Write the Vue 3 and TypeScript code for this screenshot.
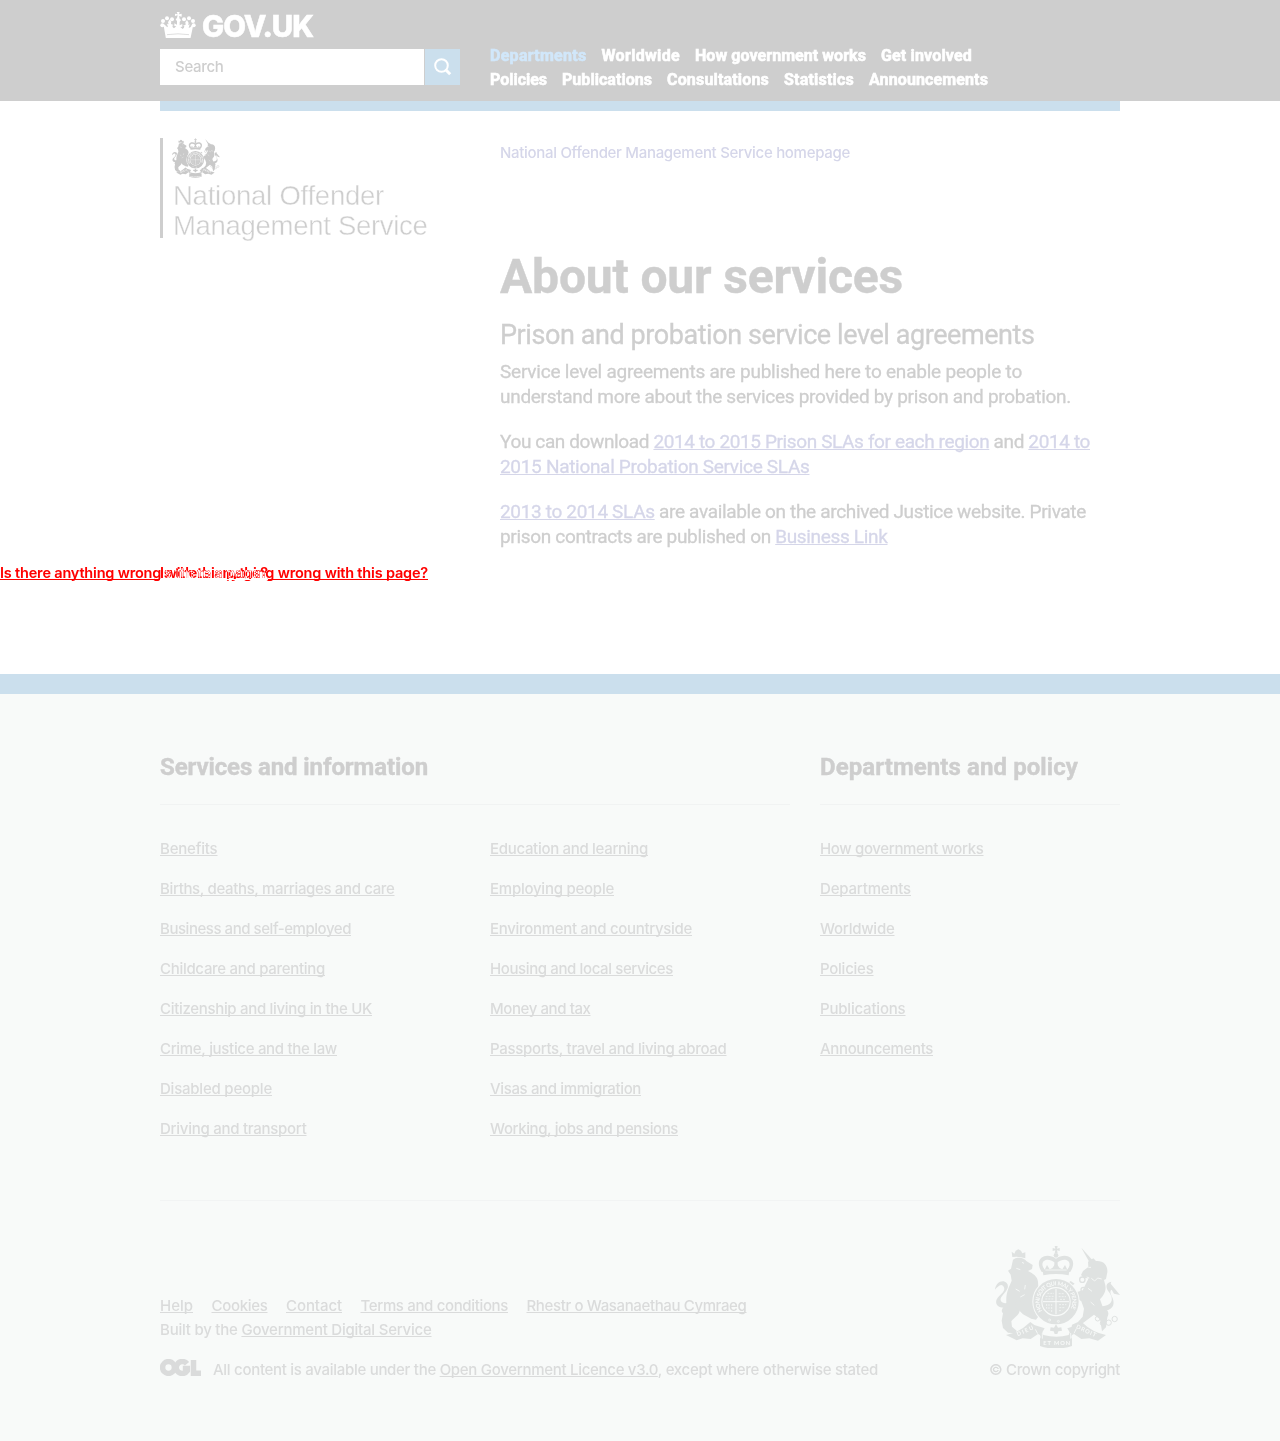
<script setup lang="ts">
import type { Directive } from 'vue'

interface FooterColumn {
  title: string
  width: number
  wide: boolean
  lists: [string, number][][]
}

// Tracks a line of text so that it fills the given measure in pixels.
const vFit: Directive<HTMLElement, number> = {
  mounted(el, { value }) {
    const width = el.getBoundingClientRect().width
    const count = (el.textContent ?? '').trim().length
    el.style.letterSpacing = `${(value - width) / count}px`
  },
}

const nav: [string, number][][] = [
  [['Departments', 96.5], ['Worldwide', 78.5], ['How government works', 171], ['Get involved', 91]],
  [['Policies', 57], ['Publications', 90], ['Consultations', 102], ['Statistics', 70], ['Announcements', 119]],
]

const columns: FooterColumn[] = [
  {
    title: 'Services and information',
    width: 268,
    wide: true,
    lists: [
      [
        ['Benefits', 57.5],
        ['Births, deaths, marriages and care', 234.5],
        ['Business and self-employed', 191],
        ['Childcare and parenting', 165],
        ['Citizenship and living in the UK', 212],
        ['Crime, justice and the law', 177],
        ['Disabled people', 112],
        ['Driving and transport', 146.5],
      ],
      [
        ['Education and learning', 158],
        ['Employing people', 124],
        ['Environment and countryside', 202],
        ['Housing and local services', 183],
        ['Money and tax', 100.5],
        ['Passports, travel and living abroad', 236.5],
        ['Visas and immigration', 151],
        ['Working, jobs and pensions', 188],
      ],
    ],
  },
  {
    title: 'Departments and policy',
    width: 258,
    wide: false,
    lists: [
      [
        ['How government works', 163.5],
        ['Departments', 91],
        ['Worldwide', 74.5],
        ['Policies', 53.5],
        ['Publications', 85.5],
        ['Announcements', 113],
      ],
    ],
  },
]

const meta: [string, number][] = [
  ['Help', 33],
  ['Cookies', 56],
  ['Contact', 56],
  ['Terms and conditions', 147.5],
  ['Rhestr o Wasanaethau Cymraeg', 220],
]
</script>

<template>
  <div class="page">
    <svg class="defs" width="0" height="0" aria-hidden="true">
      <symbol id="crest" viewBox="45 33 375 306">
        <g fill="currentColor">
          <!-- crown -->
          <path d="M224 33h9l-2 8 8-2v9l-8-2 2 9h-9l2-9-8 2v-9l8 2z" />
          <circle cx="228" cy="61" r="7" />
          <path d="M186 112C158 70 198 50 228 71c30-21 70-1 42 41l-9-5c22-30-8-42-28-25v22h-10V82c-20-17-50-5-28 25z" />
          <path d="M186 92l8 12 7-14 8 13 8-4 11-15 11 15 8 4 8-13 7 14 8-12-4 29q-38-8-76 0z" />
          <!-- lion -->
          <path d="M97 66l-2-16 8 6 4-9 8-4 8 4 4 8 9-3v18q-18-7-39-4z" />
          <path d="M99 74c14-10 34-6 40 4l19 12-2 12-12 6c16 8 28 16 30 32l2 36c-12 14-13 26-12 40l10 30-6 8-15-3-8-10-12-20-15-6c2 12 1 20-6 26-8 8-13 12-18 18l2 16 14 12-4 8-22-2-15-14-4-22 4-22c-7-7-2-12-2-14l12-18c-2-30 8-46 16-66l-3-18-8-12 9-6z" />
          <path d="M112 186l36 44 22 1 5 14-24 5-22-12-24-24z" />
          <path d="M89 214C56 228 36 204 57 184c14-14 20-20 13-30-8-10-18 3-25 10 2-22 23-32 35-20 12 14-8 30-16 42-8 14 6 22 25 18z" />
          <!-- unicorn -->
          <path d="M304 38l35 39-9 8z" />
          <path d="M324 80l16-10 8 8c22-2 36 12 34 34l-4 20-6 3 4 16c4 20-8 32-16 42l8 22c14 8 22 16 14 32l-4 30-12 12-6-36-18-14-18 14-32 24-18 4 2-12 18-8 14-16 4-24-8-22-14-10-18-5-16-20 2-14 14-12 12 8-8 6-8 8 10 12 16-2 14-4 18-36-14-1-9-9 6-12 16-12z" />
          <path d="M366 214c38-4 33-28 20-44-11-15-8-28 8-30l-2 6 28 34-18-4-7-12c-7 4-3 13 3 25 8 22-1 38-29 38z" />
          <!-- scroll -->
          <path d="M78 300q40-7 73-39l12 9 31 10-7 12 3 8q40 10 76 0l3-8-7-12 31-10 12-9q33 32 73 39l-24 17-26-7-24 2-22-15q-12 4-6 14v22q-50 16-96 0v-22q6-10-6-14l-22 15-24-2-18 6z" />
        </g>
        <g class="paper-stroke" fill="none" stroke-width="2.5">
          <path d="M109 100l12 4M107 162l12 7M136 150l-2 13M121 186l13-7M126 82l6 3M325 97h8M320 126l8 3M334 130l10 8 9-9 12 3M324 160l12 9M332 201l11 10M196 105h64M166 283l7 13M289 281l-7 14M187 294v17M272 294v17" />
        </g>
        <circle cx="228" cy="200" r="71" class="paper" />
        <circle cx="228" cy="200" r="56" fill="none" stroke="currentColor" stroke-width="24" />
        <path id="garter" d="M187.500 227.600A49 49 0 1 1 268.500 227.600" fill="none" />
        <text class="garter-text"><textPath href="#garter" textLength="204">HONI SOIT QUI MAL Y PENSE</textPath></text>
        <g fill="currentColor">
          <ellipse cx="228" cy="200" rx="41" ry="40" />
          <path class="paper" d="M206 268q22 7 44 0l-2 24h-40z" />
          <path d="M228 268l6 10 10-1 2 10-11 2-3 8h-8l-3-8-11-2 2-10 10 1z" />
          <g fill="none" stroke="currentColor">
            <circle cx="307" cy="134" r="8" stroke-width="4" />
            <circle cx="310" cy="164" r="7" stroke-width="4" />
            <g stroke-width="3">
              <circle cx="353" cy="251" r="7" /><circle cx="367" cy="265" r="6" />
              <circle cx="386" cy="263" r="8" /><circle cx="404" cy="252" r="8" />
            </g>
          </g>
        </g>
        <g class="paper-stroke" fill="none" stroke-width="2">
          <path d="M228 162v76M189 200h78" stroke-width="3" />
          <path d="M202 175h20M197 184h24M196 192h24M236 176h18M236 185h22M240 193h16M200 207v14M207 207v20M215 207v24M237 209h22M238 218h18M237 227h10" stroke-dasharray="6 3" />
          <circle cx="209" cy="255" r="3" /><circle cx="235" cy="259" r="3" />
        </g>
        <text class="motto" x="113" y="304" transform="rotate(-24 113 304)" textLength="53">DIEU</text>
        <text class="motto" x="190" y="331" textLength="80">ET MON</text>
        <text class="motto" x="287" y="279" transform="rotate(25 287 279)" textLength="64">DROIT</text>
      </symbol>
    </svg>

    <header class="header">
      <div class="container header-row">
        <div class="brand">
          <div class="logo">
            <svg class="crown" viewBox="0 0 108 78" aria-hidden="true">
              <g fill="#fff">
                <path d="M50 0h9l-2 7 8-2v9l-8-2 2 8 4 4-4 6v10l8-4v8l-6 1 7 6q5-3 5-8l-4-2 8-3-1-7 5-7 5 9-2 6 5-2-3 11 6-3 4-6 3 4-8 38q-38-6-73 0L11 41l3-4 4 6 6 3-3-11 5 2-2-6 5-9 5 7-1 7 8 3-4 2q0 5 5 8l7-6-6-1v-8l8 4v-10l-4-6 4-4 2-8-8 2V5l8 2z" />
                <circle cx="7" cy="40" r="6" /><circle cx="9" cy="27" r="6" />
                <circle cx="21" cy="19" r="6" /><circle cx="36" cy="22" r="6" />
                <circle cx="72" cy="22" r="6" /><circle cx="87" cy="19" r="6" />
                <circle cx="99" cy="27" r="6" /><circle cx="101" cy="40" r="6" />
              </g>
              <path d="M21 68q33-5 66 0" fill="none" stroke="#cecece" stroke-width="2" />
            </svg>
            <span v-fit="111" class="wordmark">GOV.UK</span>
          </div>
          <div class="search">
            <div class="search-field"><span v-fit="48.5">Search</span></div>
            <div class="search-button">
              <svg viewBox="0 0 18 18" width="18" height="18" fill="none" stroke="#fff">
                <circle cx="7.500" cy="7.500" r="6.300" stroke-width="2" />
                <path d="M11.500 11.500l4.700 4.700" stroke-width="3" />
              </svg>
            </div>
          </div>
        </div>
        <nav class="nav">
          <div v-for="(row, r) in nav" :key="r" class="nav-row">
            <a v-for="[label, width] in row" :key="label" v-fit="width" :class="{ active: label === 'Departments' }">{{ label }}</a>
          </div>
        </nav>
      </div>
    </header>
    <div class="container header-bar"></div>

    <main class="container main">
      <div class="organisation">
        <div class="org-logo">
          <svg class="org-crest"><use href="#crest" /></svg>
          <div><span v-fit="211">National Offender</span></div>
          <div><span v-fit="254.5">Management Service</span></div>
        </div>
      </div>
      <article class="article">
        <div class="homepage"><a v-fit="350">National Offender Management Service homepage</a></div>
        <h1><span v-fit="403">About our services</span></h1>
        <h2><span v-fit="534.5">Prison and probation service level agreements</span></h2>
        <p>
          <span v-fit="522">Service level agreements are published here to enable people to</span><br />
          <span v-fit="571">understand more about the services provided by prison and probation.</span>
        </p>
        <p>
          <span v-fit="590">You can download <a>2014 to 2015 Prison SLAs for each region</a> and <a>2014 to</a></span><br />
          <span v-fit="309.5"><a>2015 National Probation Service SLAs</a></span>
        </p>
        <p>
          <span v-fit="586"><a>2013 to 2014 SLAs</a> are available on the archived Justice website. Private</span><br />
          <span v-fit="387.5">prison contracts are published on <a>Business Link</a></span>
        </p>
      </article>
    </main>

    <div class="feedback">
      <a v-fit="268">Is there anything wrong with this page?</a>
      <a v-fit="268" class="shifted">Is there anything wrong with this page?</a>
    </div>

    <footer class="footer">
      <div class="container">
        <div class="columns">
          <section v-for="column in columns" :key="column.title" :class="{ wide: column.wide }">
            <h3><span v-fit="column.width">{{ column.title }}</span></h3>
            <div class="lists">
              <ul v-for="(list, i) in column.lists" :key="i">
                <li v-for="[label, width] in list" :key="label"><a v-fit="width">{{ label }}</a></li>
              </ul>
            </div>
          </section>
        </div>
        <div class="meta">
          <div>
            <div class="meta-links">
              <a v-for="[label, width] in meta" :key="label" v-fit="width">{{ label }}</a>
            </div>
            <div class="built"><span v-fit="271.5">Built by the <a>Government Digital Service</a></span></div>
            <div class="licence">
              <svg class="ogl" viewBox="0 0 41 17" fill="none" stroke="currentColor" stroke-width="5.500">
                <circle cx="8.500" cy="8.500" r="5.900" />
                <path d="M27 4.800a6 6 0 1 0 0.300 7V9.500h-4.500M33.500 1v13.300H41" />
              </svg>
              <span v-fit="665">All content is available under the <a>Open Government Licence v3.0</a>, except where otherwise stated</span>
            </div>
          </div>
          <div class="copyright">
            <svg class="footer-crest"><use href="#crest" /></svg>
            <span v-fit="131">© Crown copyright</span>
          </div>
        </div>
      </div>
    </footer>
  </div>
</template>

<style>
body {
  background: #fff;
}
</style>

<style scoped>
.page {
  height: 1441px;
  display: flex;
  flex-direction: column;
  overflow: hidden;
  background: #fff;
  color: #cecece;
  font-family: Roboto, "Liberation Sans", sans-serif;
  font-size: 16px;
  line-height: 24px;
  white-space: nowrap;
}
.defs {
  position: absolute;
}
.container {
  width: 960px;
  margin: 0 auto;
}
.header {
  height: 101px;
  flex: none;
  background: #cecece;
  color: #fff;
}
.header-row {
  display: flex;
  gap: 30px;
}
.brand {
  width: 300px;
}
.logo {
  display: flex;
  height: 49px;
}
.crown {
  width: 36px;
  height: 26px;
  margin: 12px 6px 0 0;
}
.wordmark {
  height: 30px;
  margin-top: 11px;
  font: 800 29.5px/30px Inter, "Liberation Sans", sans-serif;
  -webkit-text-stroke: 0.5px #fff;
}
.search {
  display: flex;
  gap: 1px;
  height: 36px;
}
.search-field,
.homepage,
.lists,
.meta {
  font-family: Inter, "Liberation Sans", sans-serif;
  font-size: 15px;
  font-weight: 450;
}
.search-field {
  flex: 1;
  padding-left: 15px;
  background: #fff;
  color: #cecece;
  line-height: 36px;
}
.search-button {
  display: flex;
  align-items: center;
  justify-content: center;
  width: 35px;
  background: #cbdfed;
}
.nav {
  padding-top: 44px;
  font-weight: 700;
  -webkit-text-stroke: 0.6px currentColor;
}
.nav-row {
  display: flex;
  gap: 15px;
}
.active {
  color: #d1e7fa;
}
.header-bar {
  height: 10px;
  flex: none;
  background: #cbdfed;
}
.main {
  display: flex;
  height: 563px;
  flex: none;
}
.organisation {
  width: 340px;
  padding-top: 27px;
}
.org-logo {
  height: 100px;
  padding-left: 10px;
  border-left: 3px solid #cecece;
  font: 400 27.5px/30px "Liberation Sans", sans-serif;
  -webkit-text-stroke: 0.4px #fff;
}
.org-crest {
  display: block;
  width: 48px;
  height: 40px;
  margin: 0 0 3px -1px;
  -webkit-text-stroke: 0;
  --paper: #fff;
  color: #c9c9c9;
}
.article {
  padding-top: 30px;
}
.homepage {
  color: #d5d6e9;
}
h1,
h2,
h3,
p,
ul {
  margin: 0;
  padding: 0;
}
h1 {
  margin-top: 87px;
  font-size: 48px;
  line-height: 50px;
  -webkit-text-stroke: 0.4px currentColor;
}
h2 {
  margin: 18px 0 9px;
  font-size: 27px;
  font-weight: 400;
  line-height: 30px;
  -webkit-text-stroke: 0.3px currentColor;
}
p {
  margin-bottom: 20px;
  font-size: 19px;
  line-height: 25px;
  -webkit-text-stroke: 0.3px currentColor;
}
a {
  text-underline-offset: 1px;
  text-decoration-thickness: 1px;
  text-decoration-skip-ink: none;
}
p a {
  color: #d5d6e9;
  text-decoration-line: underline;
}
/* Stray feedback links lie over the page; where they cross, they cancel out. */
.feedback {
  position: absolute;
  top: 561px;
  left: 0;
  color: #0ff;
  font-family: Inter, "Liberation Sans", sans-serif;
  font-size: 14.5px;
  font-weight: 600;
  mix-blend-mode: difference;
}
.feedback a {
  text-decoration-line: underline;
}
.feedback .shifted {
  position: absolute;
  top: 0;
  left: 160px;
  mix-blend-mode: difference;
}
.footer {
  flex: 1;
  border-top: 20px solid #cbdfed;
  background: #f8faf9;
  color: #dadbdb;
}
.columns {
  display: flex;
  gap: 30px;
  height: 449px;
  padding-top: 57px;
  border-bottom: 1px solid #f2f4f4;
}
section {
  width: 300px;
}
.wide {
  width: 630px;
}
h3 {
  height: 53px;
  border-bottom: 1px solid #f1f3f3;
  color: #cecece;
  font-size: 24px;
  line-height: 32px;
  -webkit-text-stroke: 0.4px currentColor;
}
.lists {
  display: flex;
  gap: 30px;
  padding-top: 24px;
}
ul {
  width: 300px;
  list-style: none;
}
li {
  height: 40px;
  line-height: 40px;
}
li a,
.meta a {
  text-decoration-line: underline;
}
.meta {
  display: flex;
  justify-content: space-between;
  padding-top: 45px;
}
.meta-links {
  display: flex;
  gap: 18.5px;
  margin-top: 48px;
}
.licence {
  display: flex;
  gap: 12px;
  margin-top: 16px;
}
.ogl {
  width: 41px;
  height: 17px;
  margin-top: 1px;
}
.copyright {
  display: flex;
  flex-direction: column;
  align-items: flex-end;
}
.footer-crest {
  width: 125px;
  height: 102px;
  margin-bottom: 10px;
  --paper: #f8faf9;
  color: #dfe2e1;
}
.paper {
  fill: var(--paper);
}
.paper-stroke {
  stroke: var(--paper);
}
.garter-text,
.motto {
  fill: var(--paper);
  font: 700 17px Lato, sans-serif;
}
</style>
